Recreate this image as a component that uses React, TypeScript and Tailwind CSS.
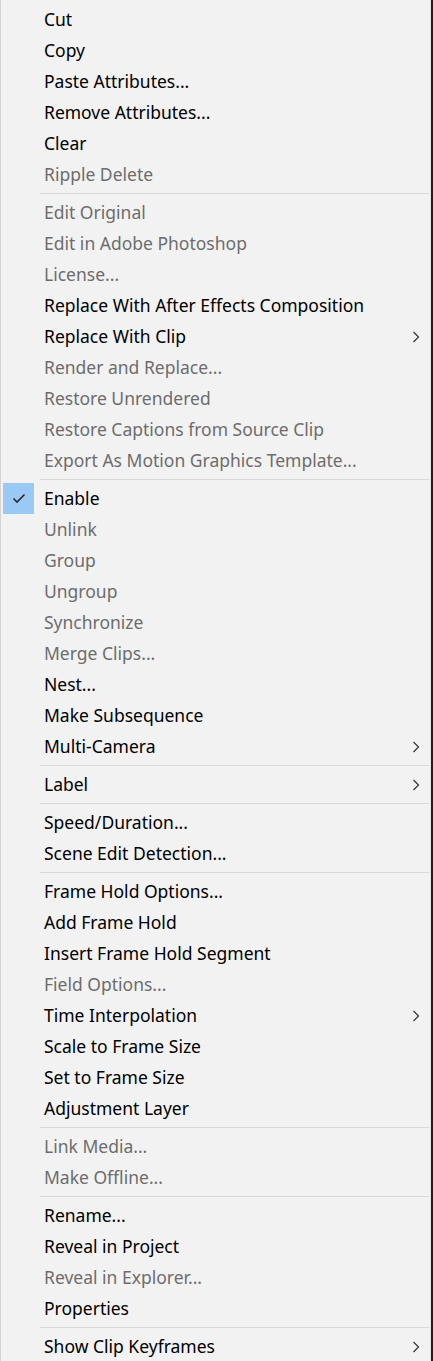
import React from "react";

type Item = { label: string; disabled?: boolean; sub?: boolean; checked?: boolean } | "sep";

const items: Item[] = [
  { label: "Cut" },
  { label: "Copy" },
  { label: "Paste Attributes..." },
  { label: "Remove Attributes..." },
  { label: "Clear" },
  { label: "Ripple Delete", disabled: true },
  "sep",
  { label: "Edit Original", disabled: true },
  { label: "Edit in Adobe Photoshop", disabled: true },
  { label: "License...", disabled: true },
  { label: "Replace With After Effects Composition" },
  { label: "Replace With Clip", sub: true },
  { label: "Render and Replace...", disabled: true },
  { label: "Restore Unrendered", disabled: true },
  { label: "Restore Captions from Source Clip", disabled: true },
  { label: "Export As Motion Graphics Template...", disabled: true },
  "sep",
  { label: "Enable", checked: true },
  { label: "Unlink", disabled: true },
  { label: "Group", disabled: true },
  { label: "Ungroup", disabled: true },
  { label: "Synchronize", disabled: true },
  { label: "Merge Clips...", disabled: true },
  { label: "Nest..." },
  { label: "Make Subsequence" },
  { label: "Multi-Camera", sub: true },
  "sep",
  { label: "Label", sub: true },
  "sep",
  { label: "Speed/Duration..." },
  { label: "Scene Edit Detection..." },
  "sep",
  { label: "Frame Hold Options..." },
  { label: "Add Frame Hold" },
  { label: "Insert Frame Hold Segment" },
  { label: "Field Options...", disabled: true },
  { label: "Time Interpolation", sub: true },
  { label: "Scale to Frame Size" },
  { label: "Set to Frame Size" },
  { label: "Adjustment Layer" },
  "sep",
  { label: "Link Media...", disabled: true },
  { label: "Make Offline...", disabled: true },
  "sep",
  { label: "Rename..." },
  { label: "Reveal in Project" },
  { label: "Reveal in Explorer...", disabled: true },
  { label: "Properties" },
  "sep",
  { label: "Show Clip Keyframes", sub: true },
];

function Chevron() {
  return (
    <svg width="8" height="12" viewBox="0 0 8 12" className="absolute right-[10px] top-1/2 -translate-y-1/2">
      <path d="M1.5 1 L6.5 6 L1.5 11" fill="none" stroke="#333" strokeWidth="1.2" />
    </svg>
  );
}

function Check() {
  return (
    <div className="absolute left-[2px] top-0 w-[31px] h-[31px] bg-[#99c9f4] flex items-center justify-center">
      <svg width="14" height="11" viewBox="0 0 14 11">
        <path d="M1.5 5.5 L5 9 L12.5 1.5" fill="none" stroke="#2b2b2b" strokeWidth="1.6" />
      </svg>
    </div>
  );
}

export default function App() {
  return (
    <div className="w-[433px] h-[1361px] bg-[#1e1e1e] overflow-hidden">
      <div
        className="w-[431px] bg-[#f2f2f2] border-l border-l-[#d4d4d4] border-r border-r-[#e4e4e4] pt-[4px] pb-[4px]"
        style={{ fontFamily: '"Noto Sans", "Noto Sans CJK KR", sans-serif' }}
      >
        {items.map((it, i) =>
          it === "sep" ? (
            <div key={i} className="py-[3px] pl-[39px] pr-[1px]">
              <div className="h-px bg-[#d9d9d9]" />
            </div>
          ) : (
            <div key={i} className="relative h-[31px] flex items-center pl-[43px]">
              {it.checked && <Check />}
              <span
                className={
                  "text-[17.5px] leading-none " + (it.disabled ? "text-[#6d6d6d]" : "text-[#000000]")
                }
              >
                {it.label}
              </span>
              {it.sub && <Chevron />}
            </div>
          )
        )}
      </div>
    </div>
  );
}
